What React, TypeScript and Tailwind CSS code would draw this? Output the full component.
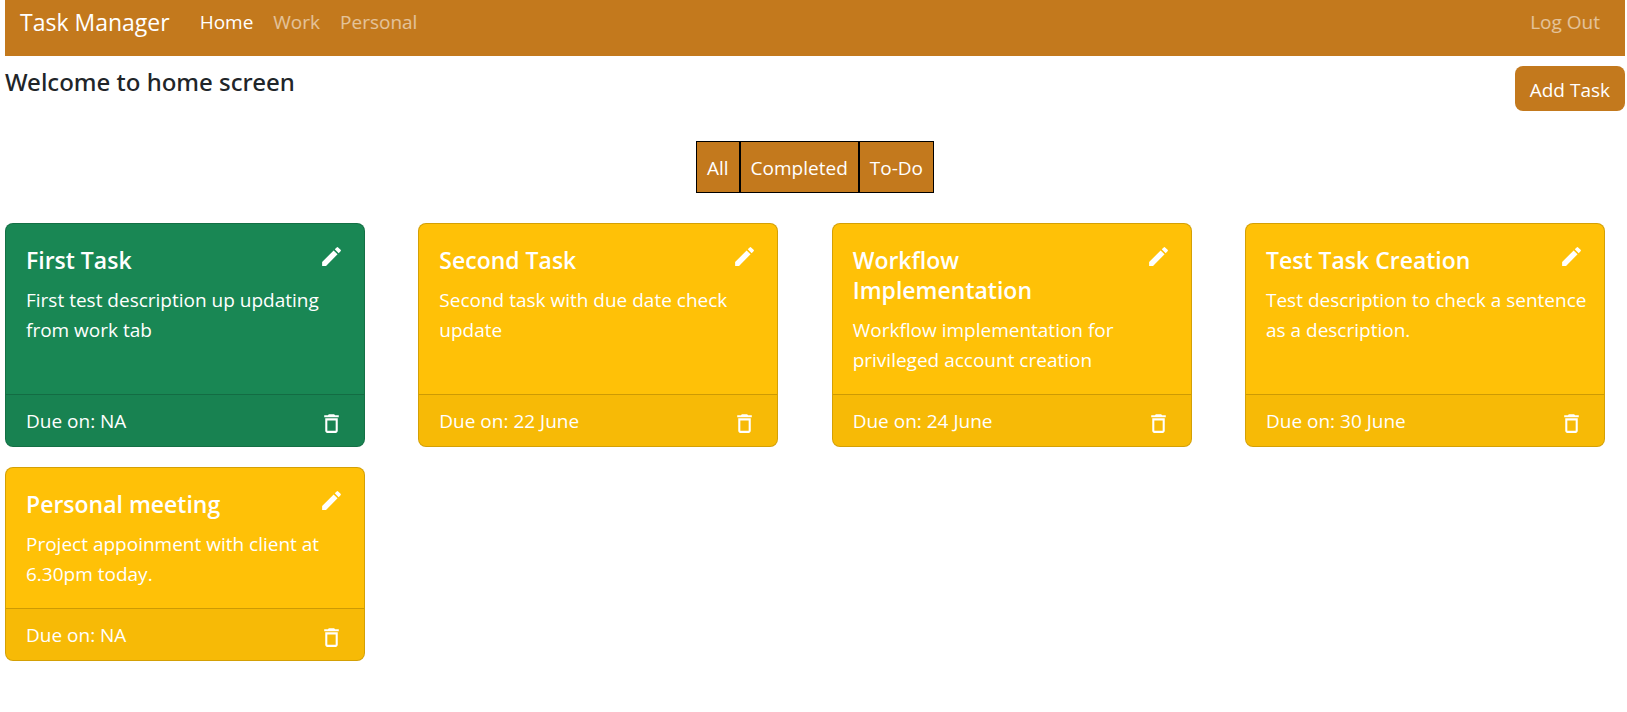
import { MdDeleteOutline, MdEdit } from "react-icons/md";

type Task = {
  title: string;
  description: string;
  due: string;
  completed: boolean;
};

const tasks: Task[] = [
  { title: "First Task", description: "First test description up updating from work tab", due: "NA", completed: true },
  { title: "Second Task", description: "Second task with due date check update", due: "22 June", completed: false },
  { title: "Workflow Implementation", description: "Workflow implementation for privileged account creation", due: "24 June", completed: false },
  { title: "Test Task Creation", description: "Test description to check a sentence as a description.", due: "30 June", completed: false },
  { title: "Personal meeting", description: "Project appoinment with client at 6.30pm today.", due: "NA", completed: false },
];

const filters = ["All", "Completed", "To-Do"];

function Navbar() {
  return (
    <nav className="flex items-center bg-[#c3791d] pt-[7px] pr-[15px] pb-[19px] pl-[15px] text-white/55">
      <a href="#" className="mr-5 text-[23px] leading-[30px] text-white">Task Manager</a>
      <a href="#home" className="px-[10px] text-white">Home</a>
      <a href="#work" className="px-[10px]">Work</a>
      <a href="#personal" className="px-[10px]">Personal</a>
      <a href="#logout" className="ml-auto px-[10px]">Log Out</a>
    </nav>
  );
}

function TaskCard({ task }: { task: Task }) {
  return (
    <article
      className={`flex flex-col overflow-hidden rounded-lg border border-black/17 text-white ${
        task.completed ? "bg-[#198754]" : "bg-[#ffc107]"
      }`}
    >
      <div className="flex-1 px-5 pt-5 pb-[19px]">
        <div className="mb-[10px] flex items-start justify-between gap-5">
          <h2 className="pt-px text-[23px] leading-[30px] font-semibold">{task.title}</h2>
          <button type="button" aria-label={`Edit ${task.title}`} className="shrink-0">
            <MdEdit size={25} />
          </button>
        </div>
        <p className="-mr-3">{task.description}</p>
      </div>
      <footer className="flex items-end justify-between border-t border-black/17 bg-black/3 px-5 pt-[11px] pb-[10px]">
        <span>Due on: {task.due}</span>
        <button type="button" aria-label={`Delete ${task.title}`}>
          <MdDeleteOutline size={25} />
        </button>
      </footer>
    </article>
  );
}

export default function App() {
  return (
    <div className="min-h-screen bg-white pr-[2px] pl-[5px] font-['Open_Sans','Noto_Sans',sans-serif] text-[19px] leading-[30px] text-[#212529]">
      <Navbar />
      <header className="mt-[10px] flex items-start justify-between">
        <h1 className="font-['Noto_Sans',sans-serif] text-[24px] leading-[32px] font-medium">Welcome to home screen</h1>
        <button type="button" className="rounded-lg bg-[#c3791d] px-[15px] pt-[9px] pb-[6px] text-white">Add Task</button>
      </header>
      <div className="mt-[30px] flex justify-center text-white">
        {filters.map((filter) => (
          <button key={filter} type="button" className="border border-black bg-[#c3791d] px-[10px] pt-[11px] pb-[9px]">
            {filter}
          </button>
        ))}
      </div>
      <main className="mt-[30px] grid grid-cols-[repeat(auto-fill,360px)] justify-between gap-y-5 pr-5 pb-5">
        {tasks.map((task) => (
          <TaskCard key={task.title} task={task} />
        ))}
      </main>
    </div>
  );
}
